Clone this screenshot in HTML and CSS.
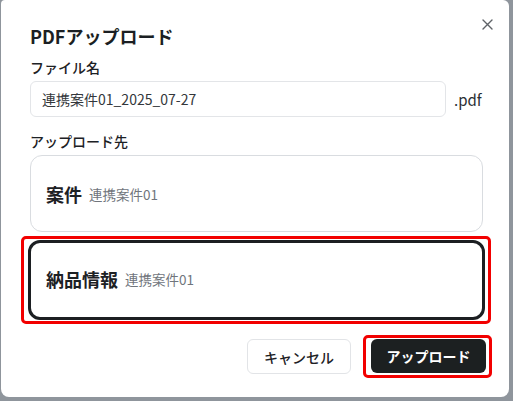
FILE: index.html
```html
<!DOCTYPE html>
<html lang="ja">
<head>
<meta charset="utf-8">
<link rel="stylesheet" href="styles.css">
</head>
<body>
<div class="dialog">
  <button class="close" aria-label="close">
    <svg width="11" height="11" viewBox="0 0 11 11"><path d="M1 1 L10 10 M10 1 L1 10" stroke="#5f6368" stroke-width="1.4" fill="none" stroke-linecap="round"/></svg>
  </button>
  <h2 class="title">PDFアップロード</h2>
  <div class="label label-first">ファイル名</div>
  <div class="input-row">
    <div class="input">連携案件01_2025_07-27</div>
    <span class="ext">.pdf</span>
  </div>
  <div class="label label-second">アップロード先</div>
  <div class="card">
    <span class="card-title">案件</span><span class="card-sub">連携案件01</span>
  </div>
  <div class="card card-selected">
    <span class="card-title">納品情報</span><span class="card-sub">連携案件01</span>
  </div>
  <div class="footer">
    <button class="btn btn-cancel">キャンセル</button>
    <button class="btn btn-primary">アップロード</button>
  </div>
</div>
</body>
</html>
```

FILE: styles.css
```css
html, body {
  margin: 0;
  padding: 0;
}
body {
  width: 513px;
  height: 401px;
  background: #8f959c;
  font-family: "Noto Sans CJK JP", "Noto Sans", sans-serif;
  color: #1d2125;
  overflow: hidden;
}
.dialog {
  position: relative;
  box-sizing: border-box;
  margin-left: 1px;
  width: 508px;
  height: 397px;
  background: #fff;
  border-radius: 0 0 8px 8px;
  border-top-left-radius: 4px;
  border-top-right-radius: 6px;
  padding: 24px 26px 0 29px;
  display: flex;
  flex-direction: column;
}
.close {
  position: absolute;
  top: 19px;
  left: 481px;
  padding: 0;
  border: 0;
  background: none;
  width: 11px;
  height: 11px;
  display: flex;
}
.title {
  margin: 0;
  font-size: 18px;
  line-height: 24px;
  font-weight: 600;
  color: #1b1f23;
}
.label {
  font-size: 14px;
  line-height: 20px;
  font-weight: 500;
  color: #1d2125;
}
.label-first {
  margin-top: 9px;
}
.label-second {
  margin-top: 14px;
}
.input-row {
  margin-top: 4px;
  display: flex;
  align-items: center;
  gap: 8px;
}
.input {
  box-sizing: border-box;
  width: 416px;
  height: 36px;
  border: 1px solid #e3e5e8;
  border-radius: 6px;
  padding: 0 11px;
  font-size: 14px;
  line-height: 34px;
  color: #33373b;
}
.ext {
  font-size: 15px;
  color: #2a2e32;
}
.card {
  box-sizing: border-box;
  margin-top: 4px;
  height: 77px;
  border: 1px solid #d9dce0;
  border-radius: 12px;
  padding: 0 15px;
  display: flex;
  align-items: center;
  gap: 7px;
}
.card-selected {
  position: relative;
  margin: 8px -2px 0 -2px;
  height: 80px;
  border: 3px solid #1c1f22;
  padding-bottom: 2px;
}
.card-selected::after {
  content: "";
  position: absolute;
  top: -7px;
  bottom: -7px;
  left: -10px;
  right: -9px;
  border: 3px solid #f20000;
  border-radius: 5px;
}
.card-title {
  font-size: 18px;
  font-weight: 700;
  color: #1d2125;
}
.card-sub {
  font-size: 13.5px;
  color: #70757c;
}
.footer {
  margin-top: 19px;
  margin-right: -3px;
  display: flex;
  justify-content: flex-end;
  align-items: flex-start;
  gap: 20px;
}
.btn {
  font-family: inherit;
  font-size: 14px;
  border-radius: 6px;
  padding: 0;
  display: flex;
  align-items: center;
  justify-content: center;
}
.btn-cancel {
  width: 104px;
  height: 35px;
  background: #fff;
  border: 1px solid #e2e4e7;
  color: #1d2125;
  font-weight: 500;
}
.btn-primary {
  position: relative;
  width: 115px;
  height: 34px;
  background: #1c2021;
  border: 0;
  color: #fff;
  font-weight: 700;
}
.btn-primary::after {
  content: "";
  position: absolute;
  top: -4px;
  bottom: -5px;
  left: -8px;
  right: -6px;
  border: 3px solid #f20000;
  border-radius: 5px;
}
```
